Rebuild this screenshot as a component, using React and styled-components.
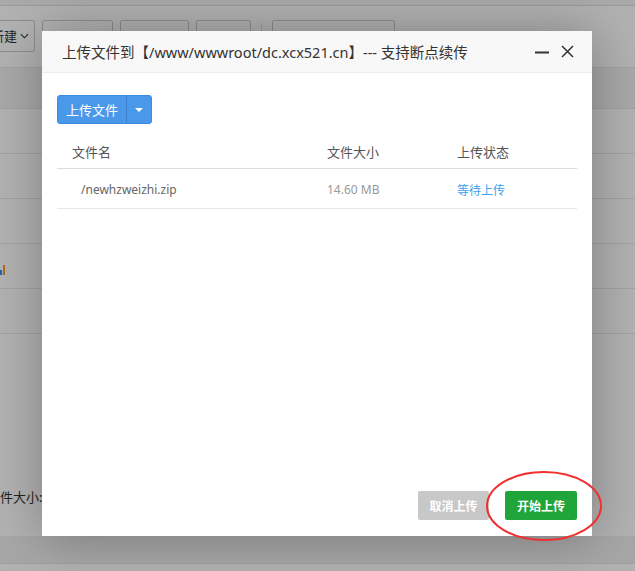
import React from "react";
import styled, { createGlobalStyle } from "styled-components";

const Global = createGlobalStyle`
  html, body { margin: 0; padding: 0; }
  body {
    width: 635px;
    height: 571px;
    overflow: hidden;
    font-family: "Noto Sans", "Noto Sans CJK SC", sans-serif;
    background: #fff;
  }
`;

const Page = styled.div`
  position: relative;
  width: 635px;
  height: 571px;
  background: #fff;
  overflow: hidden;
`;

const TopStrip = styled.div`
  height: 5px;
  border-bottom: 1px solid #ddd;
  background: #f4f4f4;
`;

const Toolbar = styled.div`
  display: flex;
  align-items: center;
  height: 61px;
  gap: 7px;
  margin-left: -10px;
  padding-bottom: 2px;
  box-sizing: border-box;
`;

const ToolButton = styled.div`
  width: ${(p) => p.w}px;
  height: 32px;
  box-sizing: border-box;
  border: 1px solid #ccc;
  border-radius: 2px;
  background: #fff;
  font-size: 13px;
  color: #333;
  display: flex;
  align-items: center;
  justify-content: flex-end;
  padding-right: 5px;
  gap: 3px;
  white-space: nowrap;
  font-family: "Noto Sans CJK SC", sans-serif;
`;

const ToolSep = styled.div`
  width: 1px;
  height: 26px;
  background: #ddd;
  margin: 0 3px;
`;

const BgHeader = styled.div`
  height: 40px;
  border-top: 1px solid #e4e4e4;
  border-bottom: 1px solid #e4e4e4;
  background: #f2f2f2;
`;

const BgRow = styled.div`
  height: 44px;
  border-bottom: 1px solid #e8e8e8;
  font-size: 12px;
  display: flex;
  align-items: center;
`;

const Bars = styled.span`
  display: inline-flex;
  align-items: flex-end;
  gap: 1px;
  height: 10px;
  margin-top: 8px;
  & i { display: block; width: 2px; background: #f0a030; }
  & i:first-child { height: 5px; background: #3a8ee6; }
  & i:last-child { height: 10px; }
`;

const BgInfo = styled.div`
  position: absolute;
  left: 0;
  top: 487px;
  font-size: 13px;
  color: #333;
  font-family: "Noto Sans CJK SC", sans-serif;
  & b { color: #2a9a2a; font-weight: normal; }
`;

const BgFooter = styled.div`
  position: absolute;
  left: 0;
  right: 0;
  top: 536px;
  height: 27px;
  background: #f0f0f0;
  border-bottom: 1px solid #e6e6e6;
`;

const Shade = styled.div`
  position: absolute;
  inset: 0;
  background: rgba(0, 0, 0, 0.3);
`;

const Modal = styled.div`
  position: absolute;
  left: 42px;
  top: 31px;
  width: 550px;
  height: 505px;
  background: #fff;
  box-shadow: 1px 1px 50px rgba(0, 0, 0, 0.3);
  display: flex;
  flex-direction: column;
`;

const ModalHead = styled.div`
  height: 41px;
  background: #f8f8f8;
  border-bottom: 1px solid #eee;
  display: flex;
  align-items: center;
  padding: 0 18px 0 20px;
  flex-shrink: 0;
`;

const Title = styled.div`
  flex: 1;
  font-size: 14.5px;
  color: #333;
  white-space: nowrap;
`;

const HeadIcons = styled.div`
  display: flex;
  align-items: center;
  gap: 12px;
  & svg { display: block; }
`;

const Body = styled.div`
  flex: 1;
  padding: 22px 15px 0 15px;
  display: flex;
  flex-direction: column;
`;

const SplitButton = styled.div`
  display: flex;
  width: 95px;
  height: 29px;
  border-radius: 3px;
  overflow: hidden;
  background: #4a98ea;
  border: 1px solid #3c8ae0;
  box-sizing: border-box;
`;

const SplitMain = styled.div`
  flex: 1;
  color: #fff;
  font-size: 13px;
  display: flex;
  align-items: center;
  justify-content: center;
  font-family: "Noto Sans CJK SC", sans-serif;
`;

const SplitCaret = styled.div`
  width: 24px;
  border-left: 1px solid #3b7fcc;
  display: flex;
  align-items: center;
  justify-content: center;
  &::after {
    content: "";
    border-left: 4px solid transparent;
    border-right: 4px solid transparent;
    border-top: 4px solid #fff;
  }
`;

const Table = styled.div`
  margin-top: 10px;
  width: 520px;
`;

const Row = styled.div`
  display: grid;
  grid-template-columns: 270px 130px 1fr;
  height: ${(p) => (p.head ? 35 : 40)}px;
  padding-top: ${(p) => (p.head ? 0 : 2)}px;
  box-sizing: border-box;
  align-items: center;
  border-bottom: 1px solid ${(p) => (p.head ? "#ddd" : "#e8e8e8")};
  font-size: ${(p) => (p.head ? 13 : 12)}px;
  color: ${(p) => (p.head ? "#555" : "#888")};
  font-family: "Noto Sans", "Noto Sans CJK SC", sans-serif;
`;

const Cell = styled.div`
  padding-left: ${(p) => p.pad || 0}px;
  color: ${(p) => p.color || "inherit"};
`;

const Footer = styled.div`
  display: flex;
  justify-content: flex-end;
  gap: 16px;
  padding: 0 15px 16px 0;
`;

const ActionButton = styled.div`
  width: ${(p) => p.w}px;
  height: 29px;
  border-radius: 2px;
  background: ${(p) => p.bg};
  color: #fff;
  font-size: 12px;
  font-weight: bold;
  display: flex;
  align-items: center;
  justify-content: center;
  font-family: "Noto Sans CJK SC", sans-serif;
`;

const Ring = styled.svg`
  position: absolute;
  left: 485px;
  top: 471px;
  pointer-events: none;
`;

export default function App() {
  return (
    <Page>
      <Global />
      <TopStrip />
      <Toolbar>
        <ToolButton w={45}>
          新建
          <svg width="10" height="6" viewBox="0 0 10 6">
            <path d="M1 1l4 4 4-4" fill="none" stroke="#333" strokeWidth="1.2" />
          </svg>
        </ToolButton>
        <ToolButton w={71} />
        <ToolButton w={69} />
        <ToolButton w={55} />
        <ToolSep />
        <ToolButton w={123} />
      </Toolbar>
      <BgHeader />
      <BgRow />
      <BgRow />
      <BgRow />
      <BgRow>
        <Bars>
          <i />
          <i />
        </Bars>
      </BgRow>
      <BgRow />
      <BgInfo>
        件大小: <b>1</b>
      </BgInfo>
      <BgFooter />
      <Shade />
      <Modal>
        <ModalHead>
          <Title>上传文件到【/www/wwwroot/dc.xcx521.cn】--- 支持断点续传</Title>
          <HeadIcons>
            <svg width="14" height="14" viewBox="0 0 14 14">
              <path d="M0 7.5h14" stroke="#333" strokeWidth="2" />
            </svg>
            <svg width="13" height="13" viewBox="0 0 13 13">
              <path d="M1 1l11 11M12 1L1 12" stroke="#333" strokeWidth="1.5" />
            </svg>
          </HeadIcons>
        </ModalHead>
        <Body>
          <SplitButton>
            <SplitMain>上传文件</SplitMain>
            <SplitCaret />
          </SplitButton>
          <Table>
            <Row head>
              <Cell pad={15}>文件名</Cell>
              <Cell>文件大小</Cell>
              <Cell>上传状态</Cell>
            </Row>
            <Row>
              <Cell pad={24} color="#666">/newhzweizhi.zip</Cell>
              <Cell color="#999">14.60 MB</Cell>
              <Cell color="#3c9ff0">等待上传</Cell>
            </Row>
          </Table>
        </Body>
        <Footer>
          <ActionButton w={71} bg="#c8c8c8">取消上传</ActionButton>
          <ActionButton w={72} bg="#20a53a">开始上传</ActionButton>
        </Footer>
      </Modal>
      <Ring width="120" height="72" viewBox="0 0 120 72">
        <ellipse cx="59" cy="35" rx="57" ry="34" fill="none" stroke="#f03030" strokeWidth="2" />
      </Ring>
    </Page>
  );
}
